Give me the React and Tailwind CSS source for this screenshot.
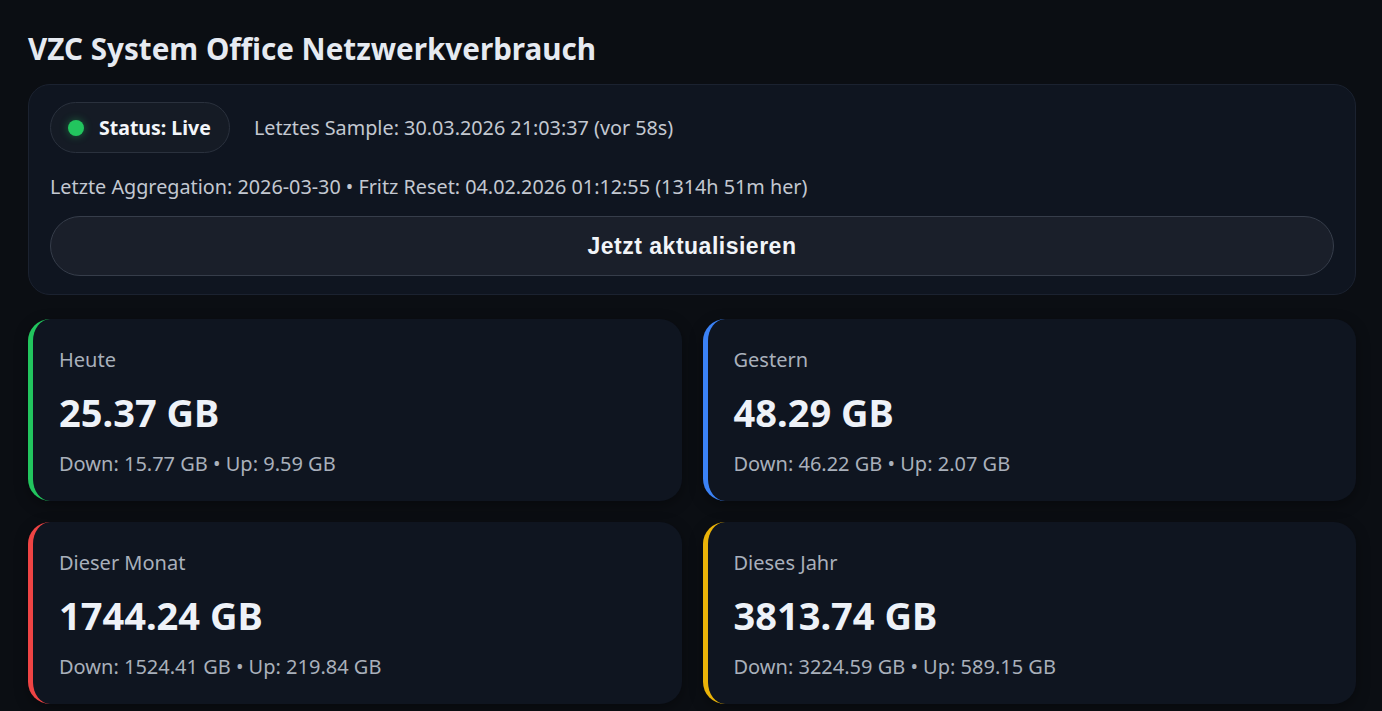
import React from "react";

const cards = [
  { label: "Heute", value: "25.37 GB", sub: "Down: 15.77 GB • Up: 9.59 GB", border: "border-l-[#22c55e]" },
  { label: "Gestern", value: "48.29 GB", sub: "Down: 46.22 GB • Up: 2.07 GB", border: "border-l-[#3b82f6]" },
  { label: "Dieser Monat", value: "1744.24 GB", sub: "Down: 1524.41 GB • Up: 219.84 GB", border: "border-l-[#ef4444]" },
  { label: "Dieses Jahr", value: "3813.74 GB", sub: "Down: 3224.59 GB • Up: 589.15 GB", border: "border-l-[#eab308]" },
];

export default function App() {
  return (
    <div
      className="min-h-screen bg-[#0b0e13] pl-[28px] pr-[26px] pt-[32px] pb-[10px] text-[#e5e9f0]"
      style={{ fontFamily: '"Noto Sans", "Open Sans", sans-serif' }}
    >
      <h1 className="text-[29.6px] leading-[34px] font-bold text-[#e6eaf1] mb-[18px]">
        VZC System Office Netzwerkverbrauch
      </h1>

      <div className="rounded-[22px] border border-[#1b2230] bg-[#0f1520] px-[21px] pt-[17px] pb-[18px]">
        <div className="flex items-center gap-[24px]">
          <div className="flex items-center gap-[15px] rounded-full border border-[#2a313d] bg-[#151b25] pl-[17px] pr-[18px] py-[11px]">
            <span className="w-[16px] h-[16px] rounded-full bg-[#22c55e] shadow-[0_0_8px_rgba(34,197,94,0.45)]" />
            <span className="text-[19.5px] leading-[27px] font-bold text-[#f3f6fa]">Status: Live</span>
          </div>
          <span className="text-[19.8px] leading-[27px] text-[#c3c8d1]">
            Letztes Sample: 30.03.2026 21:03:37 (vor 58s)
          </span>
        </div>
        <div className="mt-[20px] text-[19.8px] leading-[27px] text-[#c3c8d1]">
          Letzte Aggregation: 2026-03-30 • Fritz Reset: 04.02.2026 01:12:55 (1314h 51m her)
        </div>
        <button
          className="mt-[16px] w-full h-[60px] rounded-full border border-[#363d4a] bg-[#1a1f2a] text-[23px] tracking-[0.5px] font-bold text-[#f1f4f8]"
          style={{ fontFamily: '"Liberation Sans", Arial, sans-serif' }}
        >
          Jetzt aktualisieren
        </button>
      </div>

      <div className="mt-[24px] grid grid-cols-2 gap-[21px]">
        {cards.map((c) => (
          <div
            key={c.label}
            className={`rounded-[22px] bg-[#0f1520] border-l-[5px] ${c.border} pl-[26px] pr-[24px] pt-[27px] pb-[24px] shadow-[0_4px_14px_rgba(0,0,0,0.35)]`}
          >
            <div className="text-[20px] leading-[27px] text-[#a9b0bb]">{c.label}</div>
            <div className="mt-[16px] text-[38px] leading-[46px] font-bold text-[#eef2f8]">{c.value}</div>
            <div className="mt-[15px] text-[20px] leading-[27px] text-[#a9b0bb]">{c.sub}</div>
          </div>
        ))}
      </div>
    </div>
  );
}
